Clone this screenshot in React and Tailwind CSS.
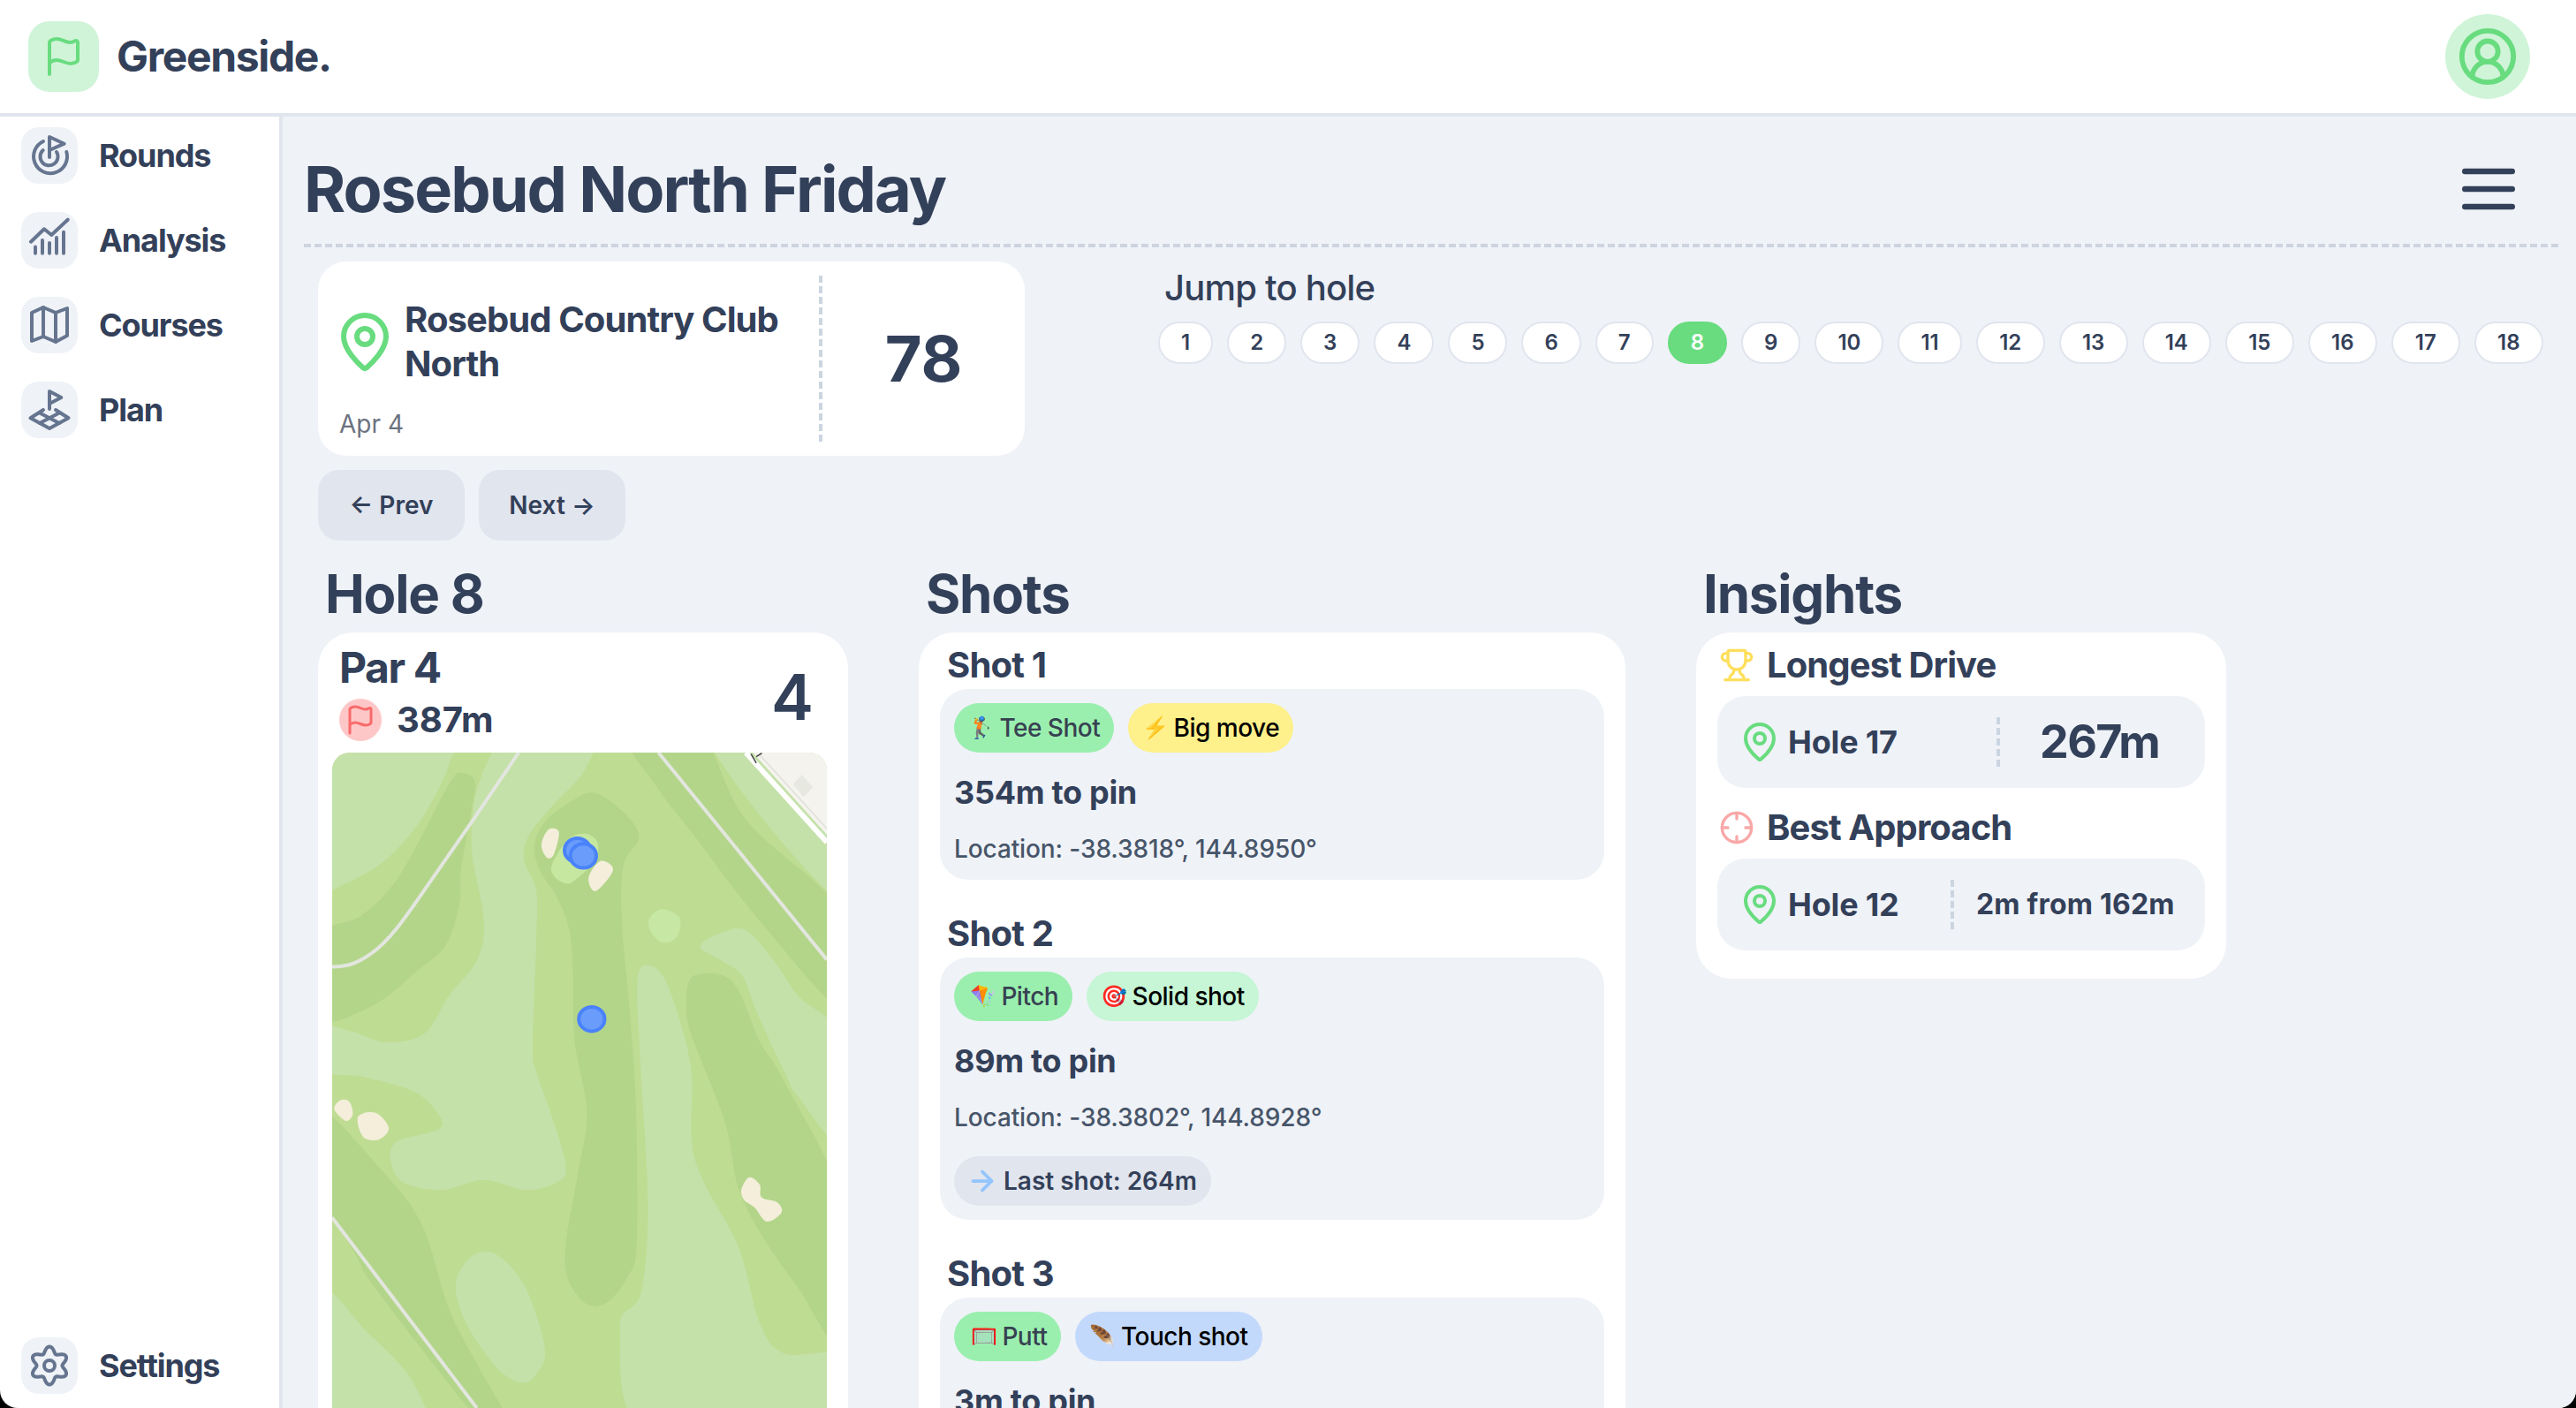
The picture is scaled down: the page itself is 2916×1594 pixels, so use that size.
import React from "react";
import { Flag, MapPin, Trophy, Crosshair, CircleUserRound, ArrowRight } from "lucide-react";

const smooth = (pts) => {
  const n = pts.length;
  let d = `M${pts[0][0]} ${pts[0][1]}`;
  for (let i = 0; i < n; i++) {
    const p0 = pts[(i - 1 + n) % n], p1 = pts[i], p2 = pts[(i + 1) % n], p3 = pts[(i + 2) % n];
    const t = 6;
    d += `C${(p1[0] + (p2[0] - p0[0]) / t).toFixed(1)} ${(p1[1] + (p2[1] - p0[1]) / t).toFixed(1)} ${(p2[0] - (p3[0] - p1[0]) / t).toFixed(1)} ${(p2[1] - (p3[1] - p1[1]) / t).toFixed(1)} ${p2[0]} ${p2[1]}`;
  }
  return d + "Z";
};

const LIGHT = "#c5e1aa", MID = "#bfdc93", DARK = "#b3d58a", SAND = "#f4eedb", ROAD = "#e3e6df";

const lightShapes = [
  [[20, 220], [420, 220], [405, 280], [370, 340], [300, 420], [200, 490], [66, 540], [20, 555]],
  [[590, 220], [810, 220], [790, 300], [700, 370], [630, 430], [615, 480], [650, 540], [650, 640], [640, 850], [650, 900], [700, 1000], [735, 1090], [710, 1120], [620, 1135], [500, 1115], [380, 1135], [270, 1120], [235, 1080], [250, 1040], [370, 1015], [370, 985], [300, 940], [150, 910], [20, 897], [20, 812], [120, 820], [220, 842], [330, 825], [400, 750], [480, 680], [500, 600], [465, 450], [490, 320]],
  [[1130, 220], [1260, 220], [1530, 445], [1530, 565], [1300, 400]],
  [[1120, 652], [1180, 625], [1250, 620], [1330, 680], [1400, 750], [1530, 840], [1530, 1045], [1400, 950], [1360, 900], [1280, 780], [1240, 710], [1180, 680]],
  [[940, 720], [975, 690], [1020, 720], [1070, 820], [1095, 910], [1095, 1040], [1130, 1120], [1230, 1250], [1290, 1400], [1360, 1460], [1530, 1470], [1530, 1620], [975, 1620], [890, 1410], [950, 1340], [970, 1170], [950, 900]],
  [[420, 1320], [470, 1265], [540, 1265], [620, 1330], [675, 1450], [650, 1500], [610, 1518], [540, 1490], [450, 1400]],
  [[20, 1335], [170, 1420], [300, 1520], [320, 1620], [20, 1620]],
];
const darkShapes = [
  [[20, 635], [150, 590], [260, 510], [400, 330], [440, 308], [475, 325], [465, 380], [435, 500], [430, 570], [390, 650], [310, 700], [180, 770], [20, 795]],
  [[820, 347], [900, 385], [945, 435], [900, 490], [895, 600], [915, 760], [935, 960], [938, 1240], [910, 1310], [850, 1360], [790, 1360], [740, 1310], [735, 1240], [770, 1100], [795, 980], [760, 840], [755, 700], [745, 620], [710, 555], [660, 500], [645, 450], [680, 400], [760, 360]],
  [[1110, 708], [1180, 708], [1230, 740], [1290, 840], [1360, 920], [1530, 1170], [1530, 1450], [1400, 1330], [1300, 1230], [1228, 1130], [1190, 1000], [1095, 830], [1080, 770], [1085, 725]],
  [[900, 220], [1110, 220], [1250, 400], [1530, 590], [1530, 775], [1300, 610], [1100, 430], [1000, 340]],
  [[20, 970], [200, 1090], [320, 1200], [400, 1370], [480, 1480], [590, 1620], [520, 1620], [200, 1340], [130, 1260], [20, 1120]],
];
const sands = [
  [[665, 450], [685, 420], [715, 425], [700, 470], [680, 475]],
  [[800, 515], [835, 482], [870, 500], [820, 542]],
  [[72, 975], [90, 957], [115, 960], [125, 985], [105, 998]],
  [[140, 990], [190, 982], [228, 1012], [200, 1035], [155, 1030]],
  [[1237, 1135], [1260, 1110], [1290, 1125], [1295, 1150], [1340, 1160], [1352, 1180], [1310, 1198], [1275, 1170], [1245, 1155]],
];

function CourseMap() {
  return (
    <svg viewBox="66 267 1416 1301" preserveAspectRatio="none" className="block h-[742px] w-[560px] rounded-t-[20px]">
      <rect x="0" y="200" width="1600" height="1500" fill={MID} />
      {lightShapes.map((s, i) => <path key={i} d={smooth(s)} fill={LIGHT} />)}
      {darkShapes.map((s, i) => <path key={i} d={smooth(s)} fill={DARK} />)}
      <path d={smooth([[695, 490], [740, 440], [790, 428], [825, 445], [820, 480], [770, 515], [740, 527], [705, 515]])} fill="#c6e7a0" />
      <path d={smooth([[972, 600], [1010, 578], [1060, 595], [1055, 630], [1020, 645], [985, 630]])} fill="#c6e8a4" />
      {sands.map((s, i) => <path key={i} d={smooth(s)} fill={SAND} />)}
      <path d="M600 267L470 400L330 540C270 600 230 640 180 665C130 690 100 692 66 692" fill="none" stroke={ROAD} strokeWidth="4" vectorEffect="non-scaling-stroke" />
      <path d="M1000 267L1482 678" fill="none" stroke={ROAD} strokeWidth="4" vectorEffect="non-scaling-stroke" />
      <path d="M66 1190L480 1568" fill="none" stroke={ROAD} strokeWidth="4" vectorEffect="non-scaling-stroke" />
      <path d="M1270 267H1482V430Z" fill="#f5f3ee" />
      <path d="M1385 330L1410 311L1443 336L1415 355Z" fill="#e7e9e0" />
      <path d="M1250 267L1482 445" fill="none" stroke="#ffffff" strokeWidth="6" vectorEffect="non-scaling-stroke" />
      <path d="M1288 270L1482 418" fill="none" stroke="#dedfda" strokeWidth="1.5" vectorEffect="non-scaling-stroke" />
      <path d="M1265 270L1280 288M1280 275L1296 268" fill="none" stroke="#444" strokeWidth="1.5" vectorEffect="non-scaling-stroke" />
      {[[768, 461], [785, 472], [809, 796]].map(([x, y]) => (
        <ellipse key={x} cx={x} cy={y} rx="37" ry="24" fill="#6a9dfb" stroke="#4a82fa" strokeWidth="4" vectorEffect="non-scaling-stroke" />
      ))}
    </svg>
  );
}

const strokeProps = { fill: "none", stroke: "#66758f", strokeWidth: 4, strokeLinecap: "round", strokeLinejoin: "round" };

function RoundsIcon() {
  return (
    <svg viewBox="0 0 64 64" className="h-16 w-16" {...strokeProps}>
      <path d="M32 34V11L48.7 18.7L32 26" />
      <path d="M25 16A19 19 0 1 0 51.3 28" />
      <path d="M24.7 26A10 10 0 1 0 40 28" />
    </svg>
  );
}
function AnalysisIcon() {
  return (
    <svg viewBox="0 0 64 64" className="h-16 w-16" {...strokeProps}>
      <path d="M11 33.7L26 19.3L34.3 26L52.7 8.7" />
      <path d="M16 39.5V46.7M24 32V46.7M32 35V46.7M40 29V46.7M48 22.7V46.7" />
    </svg>
  );
}
function MapIcon() {
  return (
    <svg viewBox="0 0 64 64" className="h-16 w-16" {...strokeProps}>
      <path d="M12 18L25 12L39 18L52 13V44L39 51L25 45L12 50Z" />
      <path d="M25 12V45M39 18V51" />
    </svg>
  );
}
function PlanIcon() {
  return (
    <svg viewBox="0 0 64 64" className="h-16 w-16" {...strokeProps}>
      <path d="M32 31V11L45.3 18L32 25" />
      <path d="M25 32L10.5 41.3L32 53L53.5 41.3L39 32" />
      <path d="M21 35.5L43 47M43 35.5L21 47" />
    </svg>
  );
}
function SettingsIcon() {
  const pts = [];
  for (let i = 0; i < 120; i++) {
    const a = (i / 120) * Math.PI * 2;
    const r = 18 + 3.5 * Math.cos(6 * a);
    pts.push(`${(32 + r * Math.sin(a)).toFixed(2)} ${(32 - r * Math.cos(a)).toFixed(2)}`);
  }
  return (
    <svg viewBox="0 0 64 64" className="h-16 w-16" {...strokeProps}>
      <path d={"M" + pts.join("L") + "Z"} />
      <circle cx="32" cy="32" r="6" />
    </svg>
  );
}

function NavItem({ icon, label, className = "" }) {
  return (
    <div className={"flex items-center gap-6 " + className}>
      <div className="h-16 w-16 rounded-[20px] bg-[#eff2f7]">{icon}</div>
      <span className="text-[36px] leading-[48px] font-[650] tracking-[-1.1px] text-[#334059]">{label}</span>
    </div>
  );
}

function Badge({ emoji, label, className }) {
  return (
    <span className={"flex h-14 items-center gap-[6px] rounded-full px-4 text-[28px] font-medium tracking-[-0.5px] " + className}>
      <span className="text-[24px]">{emoji}</span>
      {label}
    </span>
  );
}

function Shot({ title, badges, dist, loc, last, className = "" }) {
  return (
    <div className={className}>
      <h3 className="mb-[3px] pl-2 text-[40px] leading-[48px] font-[650] tracking-[-0.8px] text-[#334059]">{title}</h3>
      <div className="rounded-[32px] bg-[#eff2f7] px-4 pt-4 pb-[14px]">
        <div className="flex gap-4">{badges}</div>
        <p className="mt-[18px] text-[36px] leading-[54px] font-[650] tracking-[-0.3px] text-[#334059]">{dist}</p>
        {loc && <p className="mt-4 text-[28px] leading-[42px] font-medium tracking-[-0.1px] text-[#475569]">{loc}</p>}
        {last && (
          <div className="mt-[23px] mb-[2px] flex h-14 w-fit items-center gap-3 rounded-full bg-[#e1e5ee] pr-4 pl-5 text-[28px] font-semibold text-[#334059]">
            <ArrowRight size={36} strokeWidth={2.5} color="#93c5fd" className="-mx-[6px]" />
            {last}
          </div>
        )}
      </div>
    </div>
  );
}

function Insight({ icon, title, hole, leftW, value, valueClass, className = "" }) {
  return (
    <div className={className}>
      <div className="mb-[11px] flex h-12 items-center gap-[14px] pl-[2px]">
        {icon}
        <h3 className="text-[40px] leading-[48px] font-[650] tracking-[-0.9px] text-[#334059]">{title}</h3>
      </div>
      <div className="flex h-[104px] items-center rounded-[32px] bg-[#eff2f7] pl-6">
        <div className={"flex items-center gap-2 " + leftW}>
          <MapPin size={48} strokeWidth={2} color="#68dc7f" />
          <span className="text-[36px] font-[650] tracking-[-0.2px] text-[#334059]">{hole}</span>
        </div>
        <div className="h-14 border-l-4 border-dashed border-[#cbd5e1]" />
        <span className={"font-bold text-[#334059] " + valueClass}>{value}</span>
      </div>
    </div>
  );
}

const holes = Array.from({ length: 18 }, (_, i) => i + 1);

export default function App() {
  return (
    <div className="h-screen w-full overflow-hidden bg-black" style={{ fontFamily: "Inter, 'Noto Color Emoji', sans-serif" }}>
      <div className="flex h-full flex-col overflow-hidden rounded-b-[20px] bg-white">
        <header className="flex h-[132px] shrink-0 items-center justify-between border-b-4 border-[#e1e5ee] pr-[52px] pl-8">
          <div className="flex items-center gap-5">
            <div className="flex h-20 w-20 items-center justify-center rounded-[24px] bg-[#d0f4d8]">
              <Flag size={48} strokeWidth={2} color="#68dc7f" />
            </div>
            <span className="text-[48px] leading-none font-[650] tracking-[-1.35px] text-[#334059]">Greenside.</span>
          </div>
          <div className="flex h-24 w-24 items-center justify-center rounded-full bg-[#d0f4d8]">
            <CircleUserRound size={70} strokeWidth={2} color="#68dc7f" />
          </div>
        </header>
        <div className="flex min-h-0 flex-1">
          <aside className="flex w-[320px] shrink-0 flex-col justify-between border-r-4 border-[#e1e5ee] px-6 pt-3 pb-4">
            <nav className="flex flex-col gap-8">
              <NavItem icon={<RoundsIcon />} label="Rounds" />
              <NavItem icon={<AnalysisIcon />} label="Analysis" />
              <NavItem icon={<MapIcon />} label="Courses" />
              <NavItem icon={<PlanIcon />} label="Plan" />
            </nav>
            <NavItem icon={<SettingsIcon />} label="Settings" />
          </aside>
          <main className="min-w-0 flex-1 overflow-hidden bg-[#eff2f7] pr-5 pl-6">
            <div className="flex h-[148px] items-center justify-between border-b-4 border-dashed border-[#cdd4e0] pt-5 pr-[39px]">
              <h1 className="text-[72px] leading-none font-bold tracking-[-1.9px] text-[#334059]">Rosebud North Friday</h1>
              <svg width="80" height="80" viewBox="0 0 24 24" fill="none" stroke="#334059" strokeWidth="2" strokeLinecap="round">
                <path d="M4 6h16M4 12h16M4 18h16" />
              </svg>
            </div>
            <div className="pt-4 pl-4">
              <div className="flex">
                <div className="w-[800px] shrink-0">
                  <div className="flex h-[220px] rounded-[32px] bg-white">
                    <div className="flex w-[567px] shrink-0 flex-col px-6 pt-[41px]">
                      <div className="flex items-center gap-[9px]">
                        <MapPin size={72} strokeWidth={2} color="#68dc7f" className="-ml-[7px] shrink-0" />
                        <span className="text-[40px] leading-[50px] font-[650] tracking-[-0.9px] text-[#334059]">Rosebud Country Club North</span>
                      </div>
                      <span className="mt-[23px] text-[28px] leading-10 text-[#6b7280]">Apr 4</span>
                    </div>
                    <div className="my-4 border-l-4 border-dashed border-[#cbd5e1]" />
                    <div className="flex flex-1 items-center justify-center text-[72px] font-bold text-[#334059]">78</div>
                  </div>
                  <div className="mt-4 flex gap-4">
                    <button className="h-20 w-[166px] rounded-[24px] bg-[#e1e5ee] text-[28px] font-semibold text-[#334059]">← Prev</button>
                    <button className="h-20 w-[166px] rounded-[24px] bg-[#e1e5ee] text-[28px] font-semibold text-[#334059]">Next →</button>
                  </div>
                </div>
                <div className="ml-[151px]">
                  <h2 className="mt-[6px] ml-[7px] text-[40px] leading-[48px] font-medium tracking-[-0.8px] text-[#334059]">Jump to hole</h2>
                  <div className="mt-[14px] flex gap-4">
                    {holes.map((h) => (
                      <span
                        key={h}
                        className={
                          (h === 8
                            ? "border-[#68dc7f] bg-[#68dc7f] text-white "
                            : "border-[#e1e5ee] bg-white text-[#334059] ") +
                          (h >= 10 && h !== 11 ? "min-w-[78px] " : "") +
                          "flex h-12 items-center justify-center rounded-full border-2 px-6 text-[24px] font-semibold"
                        }
                      >
                        {h}
                      </span>
                    ))}
                  </div>
                </div>
              </div>
              <div className="mt-6 flex gap-20">
                <section className="w-[600px] shrink-0">
                  <h2 className="mb-2 pl-2 text-[60px] leading-[72px] font-bold tracking-[-1.2px] text-[#334059]">Hole 8</h2>
                  <div className="rounded-t-[40px] bg-white px-4">
                    <div className="flex h-[136px] items-center justify-between pr-[23px] pl-2">
                      <div>
                        <div className="-mt-[4px] pb-[5px] text-[48px] leading-[60px] font-[650] tracking-[-1.4px] text-[#334059]">Par 4</div>
                        <div className="flex items-center gap-[17px]">
                          <div className="flex h-12 w-12 items-center justify-center rounded-full bg-[#fec7c7]">
                            <Flag size={36} strokeWidth={2} color="#f96a6a" />
                          </div>
                          <span className="text-[40px] leading-[48px] font-[650] text-[#334059]">387m</span>
                        </div>
                      </div>
                      <span className="mt-[10px] text-[72px] font-semibold text-[#334059]">4</span>
                    </div>
                    <CourseMap />
                  </div>
                </section>
                <section className="w-[800px] shrink-0">
                  <h2 className="mb-2 pl-2 text-[60px] leading-[72px] font-bold tracking-[-1.2px] text-[#334059]">Shots</h2>
                  <div className="rounded-t-[40px] bg-white px-6 pt-[13px]">
                    <Shot
                      className="mb-[37px]"
                      title="Shot 1"
                      dist="354m to pin"
                      loc="Location: -38.3818°, 144.8950°"
                      badges={<>
                        <Badge emoji="🏌️" label="Tee Shot" className="bg-[#9aefae] text-[#374151]" />
                        <Badge emoji="⚡" label="Big move" className="bg-[#fef08a] text-black" />
                      </>}
                    />
                    <Shot
                      className="mb-[37px]"
                      title="Shot 2"
                      dist="89m to pin"
                      loc="Location: -38.3802°, 144.8928°"
                      last="Last shot: 264m"
                      badges={<>
                        <Badge emoji="🪁" label="Pitch" className="bg-[#9aefae] pl-[18px] text-[#374151]" />
                        <Badge emoji="🎯" label="Solid shot" className="bg-[#c6f6d5] text-black" />
                      </>}
                    />
                    <Shot
                      title="Shot 3"
                      dist="3m to pin"
                      badges={<>
                        <Badge emoji="🥅" label="Putt" className="bg-[#9aefae] pl-[19px] text-[#374151]" />
                        <Badge emoji="🪶" label="Touch shot" className="bg-[#c3d9fc] text-black" />
                      </>}
                    />
                  </div>
                </section>
                <section className="w-[600px] shrink-0">
                  <h2 className="mb-2 pl-2 text-[60px] leading-[72px] font-bold tracking-[-1.2px] text-[#334059]">Insights</h2>
                  <div className="rounded-[40px] bg-white px-6 pt-[13px] pb-8">
                    <Insight
                      className="mb-[21px]"
                      icon={<Trophy size={40} strokeWidth={2} color="#fedf5c" />}
                      title="Longest Drive"
                      hole="Hole 17"
                      leftW="w-[292px]"
                      value="267m"
                      valueClass="ml-[45px] text-[52px] tracking-[-1.6px]"
                    />
                    <Insight
                      icon={<Crosshair size={40} strokeWidth={2} color="#f9a8a8" />}
                      title="Best Approach"
                      hole="Hole 12"
                      leftW="w-[240px]"
                      value="2m from 162m"
                      valueClass="ml-[25px] text-[32px] tracking-[0.2px]"
                    />
                  </div>
                </section>
              </div>
            </div>
          </main>
        </div>
      </div>
    </div>
  );
}
